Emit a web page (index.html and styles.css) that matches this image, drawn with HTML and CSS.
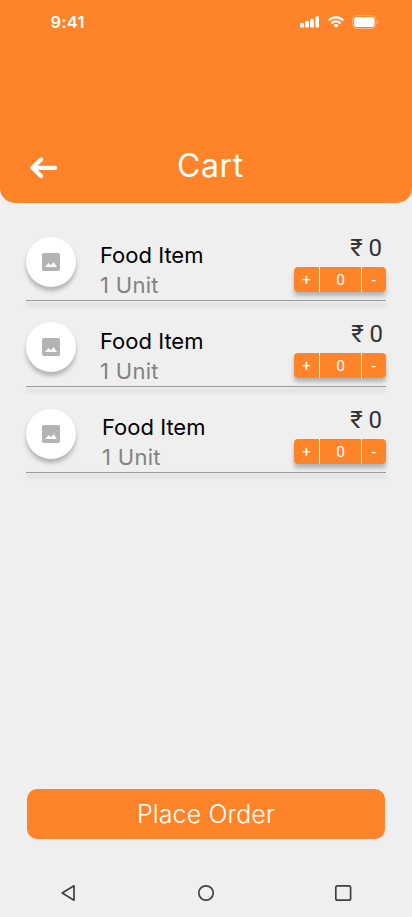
FILE: index.html
```html
<!DOCTYPE html>
<html lang="en">
<head>
<meta charset="utf-8">
<title>Cart</title>
<meta name="viewport" content="width=device-width, initial-scale=1">
<link rel="stylesheet" href="styles.css">
</head>
<body>
<svg class="defs" width="0" height="0" aria-hidden="true">
  <symbol id="photo" viewBox="0 0 18 18"><path fill-rule="evenodd" d="M2 0H16Q18 0 18 2V16Q18 18 16 18H2Q0 18 0 16V2Q0 0 2 0ZM3 14H15L11.500 9L9 12.300L6.500 10Z"/></symbol>
</svg>
<div class="screen">
  <header class="header">
    <div class="status">
      <span class="time">9:41</span>
      <div class="indicators">
        <svg class="signal" width="19" height="12" viewBox="0 0 19 12"><rect x="0" y="7" width="4" height="4.6" rx="1"/><rect x="5" y="5" width="4" height="6.6" rx="1"/><rect x="10.2" y="2.7" width="3.8" height="8.9" rx="1"/><rect x="15.4" y="0.3" width="3.6" height="11.3" rx="1"/></svg>
        <svg class="wifi" width="16" height="12" viewBox="0 0 17 12"><path d="M8.5 2.4c2.5 0 4.8 1 6.6 2.6.1.1.3.1.5 0l1.2-1.3c.2-.1.2-.4 0-.5a12 12 0 0 0-16.600 0c-.2.1-.2.4 0 .5L1.400 5c.2.1.4.1.5 0A9.700 9.700 0 0 1 8.500 2.400zM8.500 6.600c1.300 0 2.600.5 3.600 1.400.1.1.4.1.5 0l1.300-1.300c.1-.2.1-.4 0-.5a8 8 0 0 0-10.800 0c-.1.1-.1.300 0 .5L4.400 8c.1.1.4.1.5 0 1-.9 2.300-1.400 3.600-1.400zM11 9.300c.1.1.1.300 0 .4l-2.200 2.200c-.2.1-.4.1-.5 0L6 9.700c-.1-.1-.1-.3 0-.4a3.900 3.900 0 0 1 5 0z"/></svg>
        <svg class="battery" width="28" height="14" viewBox="0 0 28 14"><rect class="shell" x="0.500" y="0.500" width="23.500" height="13" rx="4"/><rect x="2" y="2" width="20.500" height="10" rx="2.800"/><path class="cap" d="M25.300 5v4c.8-.3 1.400-1.100 1.400-2s-.6-1.700-1.400-2z"/></svg>
      </div>
    </div>
    <div class="titlebar">
      <svg class="back" width="28" height="22" viewBox="0 0 28 22"><path d="M11 2.500L2.500 10.800L11 19M3.500 10.800H25"/></svg>
      <h1 class="title">Cart</h1>
    </div>
  </header>
  <main class="items">
    <article class="item">
      <div class="thumb"><svg width="18" height="18"><use href="#photo"/></svg></div>
      <div class="info"><div class="name">Food Item</div><div class="unit">1 Unit</div></div>
      <div class="side"><div class="price">₹ 0</div><div class="stepper"><span>+</span><span>0</span><span>-</span></div></div>
      <div class="divider"></div>
    </article>
    <article class="item item-second">
      <div class="thumb"><svg width="18" height="18"><use href="#photo"/></svg></div>
      <div class="info"><div class="name">Food Item</div><div class="unit">1 Unit</div></div>
      <div class="side"><div class="price">₹ 0</div><div class="stepper"><span>+</span><span>0</span><span>-</span></div></div>
      <div class="divider"></div>
    </article>
    <article class="item item-third">
      <div class="thumb"><svg width="18" height="18"><use href="#photo"/></svg></div>
      <div class="info"><div class="name">Food Item</div><div class="unit">1 Unit</div></div>
      <div class="side"><div class="price">₹ 0</div><div class="stepper"><span>+</span><span>0</span><span>-</span></div></div>
      <div class="divider"></div>
    </article>
  </main>
  <button class="order">Place Order</button>
  <nav class="nav">
    <svg width="20" height="20" viewBox="0 0 20 20"><path d="M15 2.800V17.200L3.200 10Z"/></svg>
    <svg width="20" height="20" viewBox="0 0 20 20"><circle cx="10" cy="10" r="7.200"/></svg>
    <svg width="20" height="20" viewBox="0 0 20 20"><rect x="2.800" y="2.800" width="14.800" height="14.400" rx="1.800"/></svg>
  </nav>
</div>
</body>
</html>
```
FILE: styles.css
```css
* { box-sizing: border-box; }
body { margin: 0; background: #efefef; font-family: Inter, sans-serif; }
.defs { display: none; }
.screen { width: 412px; height: 917px; display: flex; flex-direction: column; }
.header { height: 203px; background: #ff8429; border-radius: 0 0 15px 15px; color: #fff; display: flex; flex-direction: column; }
.status { height: 44px; padding: 0 32px 0 50.500px; display: flex; justify-content: space-between; align-items: center; }
.time { font-size: 16.500px; font-weight: 600; line-height: 20px; letter-spacing: .2px; }
.indicators { display: flex; align-items: center; fill: #fff; }
.wifi { margin: 0 8px 0 9px; }
.battery .shell { fill: none; stroke: #fff; opacity: .35; }
.battery .cap { opacity: .4; }
.titlebar { margin-top: 102px; height: 40px; padding-left: 30px; display: flex; align-items: center; }
.back { margin-top: 3px; fill: none; stroke: #fff; stroke-width: 4.300; stroke-linecap: round; stroke-linejoin: round; }
.title { margin: 0 0 0 119px; font-size: 32px; font-weight: 400; line-height: 40px; letter-spacing: .6px; }
.items { padding: 12px 26px 0; }
.item { height: 86px; display: grid; grid-template: 85px 1px / 50px 1fr 92px; column-gap: 24px; }
.divider { grid-column: 1 / -1; background: #9b9b9b; box-shadow: 0 4px 4px rgba(0,0,0,.25); }
.thumb { width: 50px; height: 50px; margin-top: 22px; border-radius: 50%; background: #fff; display: flex; align-items: center; justify-content: center; fill: #b3b3b3; box-shadow: 0 4px 4px rgba(0,0,0,.25); }
.item-second .thumb { margin-top: 21px; }
.info { padding-top: 25px; font-size: 22px; line-height: 30px; }
.item-third .info { padding-left: 2px; }
.name { color: #000; }
.unit { color: #828282; letter-spacing: .3px; }
.side { padding-top: 18px; }
.price { height: 34px; padding-right: 4px; text-align: right; font-family: Roboto, sans-serif; font-size: 24px; font-weight: 400; line-height: 30px; color: #333; }
.item-second .price { padding-right: 3px; }
.stepper { height: 25px; display: grid; grid-template-columns: 25px 41px 24px; column-gap: 1px; background: #fff; border-radius: 4px; overflow: hidden; box-shadow: 0 4px 4px rgba(0,0,0,.25); }
.stepper span { background: #ff8429; color: #fff; text-align: center; font-family: Roboto, sans-serif; font-size: 15.500px; font-weight: 400; line-height: 27px; }
.order { margin: auto 27px 0; height: 50px; padding: 0; border: 0; border-radius: 10px; background: #ff8429; color: #fff; font: 300 25px/50px Inter, sans-serif; letter-spacing: .1px; }
.nav { height: 48px; margin: 30px 0 0; padding: 0 59px; display: flex; justify-content: space-between; align-items: center; fill: none; stroke: #404040; stroke-width: 1.700; stroke-linejoin: round; }
```
